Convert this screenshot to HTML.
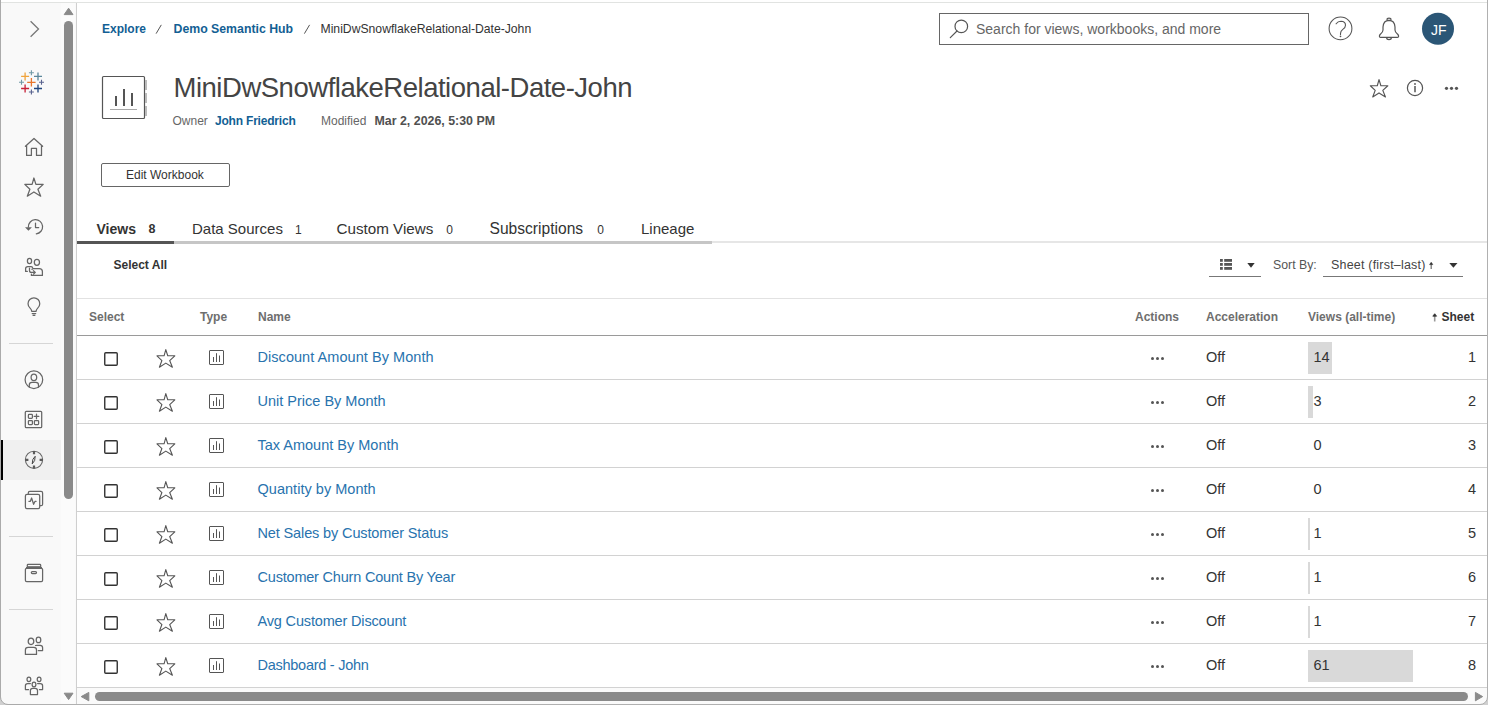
<!DOCTYPE html><html><head><meta charset="utf-8"><title>Workbook</title><style>
*{margin:0;padding:0;box-sizing:border-box}
html,body{width:1488px;height:705px;overflow:hidden;background:#fff;
 font-family:"Liberation Sans",sans-serif;position:relative}
.t{position:absolute;white-space:nowrap}
.a{position:absolute}
svg.i{position:absolute;left:0;top:0;overflow:visible}
</style></head><body>
<div class="a" style="left:0px;top:2px;width:1488px;height:1px;background:#e1e3e1;"></div>
<div class="a" style="left:1px;top:3px;width:75px;height:701px;background:#f9f9f9;"></div>
<div class="a" style="left:61px;top:3px;width:14px;height:701px;background:#fbfbfb;"></div>
<div class="a" style="left:76px;top:3px;width:1px;height:701px;background:#cfcfcf;"></div>
<div class="a" style="left:0px;top:0px;width:1px;height:705px;background:#ababab;"></div>
<div class="a" style="left:1487px;top:0px;width:1px;height:705px;background:#b0b0b0;"></div>
<div class="a" style="left:0px;top:704px;width:1488px;height:1px;background:#b0b0b0;"></div>
<div class="a" style="left:1px;top:440px;width:60px;height:40px;background:#f0f0f0;"></div>
<div class="a" style="left:1px;top:440px;width:2px;height:40px;background:#000;"></div>
<div class="a" style="left:9px;top:343px;width:44px;height:1px;background:#d6d6d6;"></div>
<div class="a" style="left:9px;top:536px;width:44px;height:1px;background:#d6d6d6;"></div>
<div class="a" style="left:9px;top:609px;width:44px;height:1px;background:#d6d6d6;"></div>
<div class="a" style="left:64px;top:21px;width:9px;height:478px;background:#8a8a8a;border-radius:4.5px"></div>
<svg class="i" width="77" height="705"><path d="M30.6 21.2 L38.5 29 L30.6 36.8" fill="none" stroke="#777" stroke-width="1.3"/><path d="M27.2 82.3 H35.6 M31.4 78.1 V86.5" stroke="#e8762c" stroke-width="1.3" fill="none"/><path d="M21.1 76.4 H29.1 M25.1 72.4 V80.4" stroke="#f0a43c" stroke-width="1.3" fill="none"/><path d="M34 76.4 H42 M38 72.4 V80.4" stroke="#5b879b" stroke-width="1.3" fill="none"/><path d="M21.1 88.5 H29.1 M25.1 84.5 V92.5" stroke="#c72037" stroke-width="1.3" fill="none"/><path d="M34 88.5 H42 M38 84.5 V92.5" stroke="#1f457e" stroke-width="1.3" fill="none"/><path d="M28.9 72.7 H33.9 M31.4 70.2 V75.2" stroke="#7099a6" stroke-width="1.1" fill="none"/><path d="M28.9 92 H33.9 M31.4 89.5 V94.5" stroke="#59628e" stroke-width="1.1" fill="none"/><path d="M19.0 82.3 H24.0 M21.5 79.8 V84.8" stroke="#7099a6" stroke-width="1.1" fill="none"/><path d="M39.0 82.3 H44.0 M41.5 79.8 V84.8" stroke="#59628e" stroke-width="1.1" fill="none"/><path d="M25.4 146.3 L34 138.5 L42.6 146.3 M26.6 145.2 V155.4 H31.4 V148.4 H36.5 V155.4 H41.5 V145.2" fill="none" stroke="#666" stroke-width="1.25" stroke-linecap="round" stroke-linejoin="round"/><path d="M33.90 178.00 L35.90 184.40 L43.20 184.40 L37.90 189.30 L40.70 196.20 L33.90 192.00 L27.30 196.20 L29.90 189.30 L24.80 184.40 L32.10 184.40 Z" fill="none" stroke="#666" stroke-width="1.25" stroke-linecap="round" stroke-linejoin="round" stroke-miterlimit="1.5"/><path d="M28.4 227 A7.1 7.1 0 1 1 36.3 233.8" fill="none" stroke="#666" stroke-width="1.25" stroke-linecap="round" stroke-linejoin="round"/><path d="M25 227.3 L31.9 227.3 L28.45 230.8 Z" fill="#666"/><path d="M35.5 223.1 V227.5 H38.7" fill="none" stroke="#666" stroke-width="1.25" stroke-linecap="round" stroke-linejoin="round"/><ellipse cx="29.5" cy="261" rx="2.1" ry="2.6" fill="none" stroke="#666" stroke-width="1.25" stroke-linecap="round" stroke-linejoin="round"/><ellipse cx="36.9" cy="262.3" rx="2.6" ry="3" fill="none" stroke="#666" stroke-width="1.25" stroke-linecap="round" stroke-linejoin="round"/><path d="M27.3 271.4 H25.6 V268.8 Q25.6 266.6 27.8 266.6 H30.8 Q32.2 266.6 32.6 267.6" fill="none" stroke="#666" stroke-width="1.25" stroke-linecap="round" stroke-linejoin="round"/><path d="M29.5 268.2 V270.4 Q29.5 272.4 31.5 272.4 H35.2 M33.4 270.6 L35.3 272.4 L33.4 274.2" fill="none" stroke="#666" stroke-width="1.25" stroke-linecap="round" stroke-linejoin="round"/><path d="M31.4 274 V275.4 H42.4 V271.6 Q42.4 268.5 39.3 268.5 H33.4 Q32.4 268.5 31.9 269.3" fill="none" stroke="#666" stroke-width="1.25" stroke-linecap="round" stroke-linejoin="round"/><path d="M31.8 311.4 Q31.6 309.6 29.9 307.9 A5.86 5.86 0 1 1 37.9 307.9 Q36.2 309.6 36 311.4 Z M32.2 313.5 H35.7 M33.1 315.4 H34.8" fill="none" stroke="#666" stroke-width="1.25" stroke-linecap="round" stroke-linejoin="round"/><circle cx="33.9" cy="379.7" r="8.8" fill="none" stroke="#666" stroke-width="1.25" stroke-linecap="round" stroke-linejoin="round"/><ellipse cx="33.9" cy="377.3" rx="2.8" ry="3.3" fill="none" stroke="#666" stroke-width="1.25" stroke-linecap="round" stroke-linejoin="round"/><path d="M29.3 387.2 V385 Q29.3 382.3 32 382.3 H35.8 Q38.5 382.3 38.5 385 V387.2" fill="none" stroke="#666" stroke-width="1.25" stroke-linecap="round" stroke-linejoin="round"/><rect x="25.3" y="411.3" width="16.4" height="16.4" rx="1" fill="none" stroke="#666" stroke-width="1.25" stroke-linecap="round" stroke-linejoin="round"/><rect x="28.4" y="414.4" width="4" height="4" rx="0.8" fill="none" stroke="#666" stroke-width="1.25" stroke-linecap="round" stroke-linejoin="round"/><rect x="28.4" y="420.5" width="4" height="4" rx="0.8" fill="none" stroke="#666" stroke-width="1.25" stroke-linecap="round" stroke-linejoin="round"/><rect x="34.4" y="420.5" width="4.2" height="4" rx="0.8" fill="none" stroke="#666" stroke-width="1.25" stroke-linecap="round" stroke-linejoin="round"/><path d="M36.5 414.1 V418.7 M34.2 416.4 H38.8" fill="none" stroke="#666" stroke-width="1.25" stroke-linecap="round" stroke-linejoin="round"/><circle cx="34" cy="459.8" r="8.6" fill="none" stroke="#666" stroke-width="1.1"/><path d="M34 451 V454.2 M34 465.4 V468.6 M25.2 459.8 H28.4 M39.6 459.8 H42.8" stroke="#5a5a5a" stroke-width="2.2"/><path d="M35.2 456.3 L34.6 460.6 L32.2 463.9 L32.9 459.3 Z" fill="none" stroke="#444" stroke-width="1"/><path d="M28.3 493.5 V492.9 Q28.3 491.4 29.8 491.4 H41.1 Q42.6 491.4 42.6 492.9 V504.2 Q42.6 505.7 41.1 505.7 H40.4" fill="none" stroke="#666" stroke-width="1.25" stroke-linecap="round" stroke-linejoin="round"/><rect x="25.4" y="494.3" width="14.3" height="14.3" rx="1.6" fill="none" stroke="#666" stroke-width="1.25" stroke-linecap="round" stroke-linejoin="round"/><path d="M28.9 501.3 H30.4 L31.6 498 L33.6 504.3 L35.1 501.3 H36.1" fill="none" stroke="#666" stroke-width="1.25" stroke-linecap="round" stroke-linejoin="round"/><rect x="25.4" y="568.3" width="17.2" height="13.3" rx="1.3" fill="none" stroke="#666" stroke-width="1.25" stroke-linecap="round" stroke-linejoin="round"/><path d="M26.6 568 V567.3 H41.4 V568" fill="none" stroke="#666" stroke-width="1.25" stroke-linecap="round" stroke-linejoin="round"/><rect x="27.3" y="564.4" width="13.4" height="2.4" rx="0.8" fill="none" stroke="#666" stroke-width="1.25" stroke-linecap="round" stroke-linejoin="round"/><rect x="31.3" y="571.5" width="5.2" height="2" rx="1" fill="none" stroke="#666" stroke-width="1.25" stroke-linecap="round" stroke-linejoin="round"/><ellipse cx="31" cy="641.3" rx="2.8" ry="3.2" fill="none" stroke="#666" stroke-width="1.25" stroke-linecap="round" stroke-linejoin="round"/><ellipse cx="38.5" cy="639.9" rx="2.3" ry="2.8" fill="none" stroke="#666" stroke-width="1.25" stroke-linecap="round" stroke-linejoin="round"/><path d="M25.4 654.4 V650 Q25.4 647.3 28.1 647.3 H33.8 Q36.5 647.3 36.5 650 V654.4 Z" fill="none" stroke="#666" stroke-width="1.25" stroke-linecap="round" stroke-linejoin="round"/><path d="M35.5 645.5 Q36 645.3 37 645.3 H40.1 Q42.6 645.3 42.6 647.8 V650.5 H38.3" fill="none" stroke="#666" stroke-width="1.25" stroke-linecap="round" stroke-linejoin="round"/><ellipse cx="28.9" cy="679.3" rx="1.9" ry="2.3" fill="none" stroke="#666" stroke-width="1.25" stroke-linecap="round" stroke-linejoin="round"/><ellipse cx="39.1" cy="679.3" rx="1.9" ry="2.3" fill="none" stroke="#666" stroke-width="1.25" stroke-linecap="round" stroke-linejoin="round"/><ellipse cx="34" cy="684.5" rx="1.9" ry="2.3" fill="none" stroke="#666" stroke-width="1.25" stroke-linecap="round" stroke-linejoin="round"/><path d="M30.4 683.5 H27.6 Q25.4 683.5 25.4 685.7 V689.5 H28.6" fill="none" stroke="#666" stroke-width="1.25" stroke-linecap="round" stroke-linejoin="round"/><path d="M37.6 683.5 H40.4 Q42.6 683.5 42.6 685.7 V689.5 H39.4" fill="none" stroke="#666" stroke-width="1.25" stroke-linecap="round" stroke-linejoin="round"/><path d="M30.4 694.6 V690.6 Q30.4 688.3 32.7 688.3 H35.2 Q37.5 688.3 37.5 690.6 V694.6 Z" fill="none" stroke="#666" stroke-width="1.25" stroke-linecap="round" stroke-linejoin="round"/><path d="M64.2 14.6 L68.6 8.2 L73 14.6 Z" fill="#8a8a8a" stroke="#8a8a8a" stroke-width="1" stroke-linejoin="round"/><path d="M64.2 693.2 L68.6 699.6 L73 693.2 Z" fill="#8a8a8a" stroke="#8a8a8a" stroke-width="1" stroke-linejoin="round"/></svg>
<div class="t" style="left:102px;top:22.84px;font-size:12px;line-height:12px;font-weight:700;color:#135f94;">Explore</div>
<div class="t" style="left:173.5px;top:22.59px;font-size:12.3px;line-height:12.3px;font-weight:700;color:#135f94;">Demo Semantic Hub</div>
<div class="t" style="left:320.5px;top:22.67px;font-size:12.2px;line-height:12.2px;font-weight:400;color:#333;">MiniDwSnowflakeRelational-Date-John</div>
<div class="a" style="left:939px;top:13px;width:370px;height:32px;border:1px solid #666;background:#fff"></div>
<div class="t" style="left:976px;top:21.75px;font-size:14px;line-height:14px;font-weight:400;color:#666;">Search for views, workbooks, and more</div>
<svg class="i" width="1488" height="705"><circle cx="961.3" cy="26.4" r="6.3" fill="none" stroke="#555" stroke-width="1.2" stroke-linecap="round" stroke-linejoin="round"/><path d="M957 31 L950.3 37.6" fill="none" stroke="#555" stroke-width="1.2" stroke-linecap="round" stroke-linejoin="round"/><circle cx="1340.5" cy="28.4" r="11.4" fill="none" stroke="#555" stroke-width="1.05"/><path d="M1336.1 23.8 Q1337.9 21.2 1341 21.2 Q1345.5 21.3 1345.5 25.2 Q1345.5 27.5 1342.8 29.4 Q1340.5 31.1 1340.5 33.4 V34.4" fill="none" stroke="#555" stroke-width="1.1" stroke-linecap="round"/><circle cx="1340.5" cy="36.3" r="0.85" fill="#555"/><path d="M1389 20.3 Q1383.4 20.4 1383 27 V30 Q1382.8 32 1381.2 33.4 L1380.1 34.5 Q1379.4 35.3 1379.4 36.3 Q1379.4 37.4 1380.5 37.4 H1397.5 Q1398.6 37.4 1398.6 36.3 Q1398.6 35.3 1397.9 34.5 L1396.8 33.4 Q1395.2 32 1395 30 V27 Q1394.6 20.4 1389 20.3 Z" fill="none" stroke="#555" stroke-width="1.2" stroke-linecap="round" stroke-linejoin="round"/><ellipse cx="1389" cy="19.3" rx="2.1" ry="1.2" fill="none" stroke="#555" stroke-width="1.2" stroke-linecap="round" stroke-linejoin="round"/><path d="M1386.4 37.7 Q1386.7 39.7 1389 39.7 Q1391.3 39.7 1391.6 37.7" fill="none" stroke="#555" stroke-width="1.2" stroke-linecap="round" stroke-linejoin="round"/><circle cx="1438" cy="28.8" r="16" fill="#2b5676"/><path d="M156.3 33.3 L161.1 25.2 M304.6 33.3 L309.4 25.2" stroke="#555" stroke-width="1" stroke-linecap="round"/><rect x="102.5" y="76.5" width="42" height="42" rx="1" fill="none" stroke="#555" stroke-width="1.2"/><path d="M116 96 V106 M124 89 V106 M132 93 V106" stroke="#555" stroke-width="2"/><path d="M110 109.5 H137" stroke="#aaa" stroke-width="1"/><path d="M146 80 V90 M146 93 V103 M146 106 V116" stroke="#bbb" stroke-width="2"/><path d="M1379.00 79.65 L1380.90 85.73 L1387.84 85.73 L1382.80 90.39 L1385.46 96.94 L1379.00 92.95 L1372.73 96.94 L1375.20 90.39 L1370.36 85.73 L1377.29 85.73 Z" fill="none" stroke="#555" stroke-width="1.15" stroke-linejoin="round" stroke-miterlimit="1.5"/><circle cx="1415" cy="88" r="7.6" fill="none" stroke="#555" stroke-width="1.2" stroke-linecap="round" stroke-linejoin="round"/><path d="M1415 86 V92.3" stroke="#555" stroke-width="1.5"/><circle cx="1415" cy="84" r="0.9" fill="#555"/><circle cx="1446.5" cy="88.3" r="1.6" fill="#555"/><circle cx="1451.5" cy="88.3" r="1.6" fill="#555"/><circle cx="1456.5" cy="88.3" r="1.6" fill="#555"/><rect x="1220" y="259" width="2.8" height="2.8" fill="#555"/><rect x="1224.2" y="259" width="7.8" height="2.8" fill="#555"/><rect x="1220" y="263" width="2.8" height="2.8" fill="#555"/><rect x="1224.2" y="263" width="7.8" height="2.8" fill="#555"/><rect x="1220" y="267" width="2.8" height="2.8" fill="#555"/><rect x="1224.2" y="267" width="7.8" height="2.8" fill="#555"/><path d="M1247.3 263 H1254.7 L1251 267.7 Z" fill="#333"/><path d="M1449.3 263 H1457.5 L1453.4 267.7 Z" fill="#333"/></svg>
<div class="t" style="left:1431px;top:22.75px;font-size:14px;line-height:14px;font-weight:400;color:#fff;">JF</div>
<div class="t" style="left:173.5px;top:74.02px;font-size:27.5px;line-height:27.5px;font-weight:400;color:#444;letter-spacing:-0.48px">MiniDwSnowflakeRelational-Date-John</div>
<div class="t" style="left:172.5px;top:115.14px;font-size:12px;line-height:12px;font-weight:400;color:#666;">Owner</div>
<div class="t" style="left:215px;top:115.14px;font-size:12px;line-height:12px;font-weight:700;color:#135f94;letter-spacing:-0.2px">John Friedrich</div>
<div class="t" style="left:321px;top:115.14px;font-size:12px;line-height:12px;font-weight:400;color:#666;">Modified</div>
<div class="t" style="left:374.5px;top:114.80px;font-size:12.4px;line-height:12.4px;font-weight:700;color:#505050;">Mar 2, 2026, 5:30 PM</div>
<div class="a" style="left:101px;top:163px;width:129px;height:24px;border:1px solid #666;border-radius:2px"></div>
<div class="t" style="left:126px;top:168.54px;font-size:12px;line-height:12px;font-weight:400;color:#333;">Edit Workbook</div>
<div class="a" style="left:77px;top:241px;width:97px;height:3px;background:#555;"></div>
<div class="a" style="left:174px;top:241px;width:538px;height:3px;background:#c6c6c6;"></div>
<div class="a" style="left:712px;top:241px;width:775px;height:2px;background:#e6e6e6;"></div>
<div class="t" style="left:96.5px;top:221.65px;font-size:14px;line-height:14px;font-weight:700;color:#333;">Views</div>
<div class="t" style="left:148.5px;top:222.92px;font-size:12.5px;line-height:12.5px;font-weight:700;color:#333;">8</div>
<div class="t" style="left:192px;top:220.80px;font-size:15px;line-height:15px;font-weight:400;color:#333;">Data Sources</div>
<div class="t" style="left:295px;top:223.84px;font-size:12px;line-height:12px;font-weight:400;color:#333;">1</div>
<div class="t" style="left:336.5px;top:220.63px;font-size:15.2px;line-height:15.2px;font-weight:400;color:#333;">Custom Views</div>
<div class="t" style="left:446.3px;top:223.84px;font-size:12px;line-height:12px;font-weight:400;color:#333;">0</div>
<div class="t" style="left:489.5px;top:220.99px;font-size:15.6px;line-height:15.6px;font-weight:400;color:#333;">Subscriptions</div>
<div class="t" style="left:597.2px;top:223.84px;font-size:12px;line-height:12px;font-weight:400;color:#333;">0</div>
<div class="t" style="left:641px;top:220.80px;font-size:15px;line-height:15px;font-weight:400;color:#333;">Lineage</div>
<div class="t" style="left:113.5px;top:258.64px;font-size:12px;line-height:12px;font-weight:700;color:#333;">Select All</div>
<div class="a" style="left:1209px;top:276px;width:52px;height:1px;background:#777;"></div>
<div class="t" style="left:1273px;top:258.89px;font-size:12.3px;line-height:12.3px;font-weight:400;color:#555;">Sort By:</div>
<div class="a" style="left:1323px;top:276px;width:140px;height:1px;background:#777;"></div>
<div class="t" style="left:1331px;top:258.72px;font-size:12.5px;line-height:12.5px;font-weight:400;color:#444;letter-spacing:0.2px">Sheet (first&ndash;last)</div>
<svg class="i" width="1488" height="705"><path d="M1431.2 263 V269" stroke="#777" stroke-width="1.3"/><path d="M1429.6 264.6 L1431.2 262.3 L1432.8 264.6 Z" fill="#333" stroke="#333" stroke-width="0.6"/></svg>
<div class="a" style="left:77px;top:298px;width:1410px;height:1px;background:#e2e2e2;"></div>
<div class="a" style="left:77px;top:335px;width:1410px;height:1px;background:#9a9a9a;"></div>
<div class="t" style="left:89px;top:310.64px;font-size:12px;line-height:12px;font-weight:700;color:#6e6e6e;">Select</div>
<div class="t" style="left:200px;top:310.64px;font-size:12px;line-height:12px;font-weight:700;color:#6e6e6e;">Type</div>
<div class="t" style="left:258px;top:310.64px;font-size:12px;line-height:12px;font-weight:700;color:#6e6e6e;">Name</div>
<div class="t" style="left:1135px;top:310.64px;font-size:12px;line-height:12px;font-weight:700;color:#6e6e6e;">Actions</div>
<div class="t" style="left:1206px;top:310.64px;font-size:12px;line-height:12px;font-weight:700;color:#6e6e6e;">Acceleration</div>
<div class="t" style="left:1308px;top:310.64px;font-size:12px;line-height:12px;font-weight:700;color:#6e6e6e;">Views (all-time)</div>
<div class="t" style="left:1441.5px;top:310.64px;font-size:12px;line-height:12px;font-weight:700;color:#333;">Sheet</div>
<div class="a" style="left:77px;top:379px;width:1410px;height:1px;background:#d2d2d2;"></div>
<div class="a" style="left:1308px;top:342px;width:24px;height:32px;background:#d9d9d9;"></div>
<div class="t" style="left:257.5px;top:349.73px;font-size:14.5px;line-height:14.5px;font-weight:400;color:#2873ae;letter-spacing:0.05px">Discount Amount By Month</div>
<div class="t" style="left:1206px;top:349.73px;font-size:14.5px;line-height:14.5px;font-weight:400;color:#333;">Off</div>
<div class="t" style="left:1313.5px;top:349.73px;font-size:14.5px;line-height:14.5px;font-weight:400;color:#333;">14</div>
<div class="t" style="left:1376px;top:349.73px;font-size:14.5px;line-height:14.5px;font-weight:400;color:#333;width:100px;text-align:right">1</div>
<div class="a" style="left:77px;top:423px;width:1410px;height:1px;background:#d2d2d2;"></div>
<div class="a" style="left:1308px;top:386px;width:5px;height:32px;background:#d9d9d9;"></div>
<div class="t" style="left:257.5px;top:393.73px;font-size:14.5px;line-height:14.5px;font-weight:400;color:#2873ae;letter-spacing:0px">Unit Price By Month</div>
<div class="t" style="left:1206px;top:393.73px;font-size:14.5px;line-height:14.5px;font-weight:400;color:#333;">Off</div>
<div class="t" style="left:1313.5px;top:393.73px;font-size:14.5px;line-height:14.5px;font-weight:400;color:#333;">3</div>
<div class="t" style="left:1376px;top:393.73px;font-size:14.5px;line-height:14.5px;font-weight:400;color:#333;width:100px;text-align:right">2</div>
<div class="a" style="left:77px;top:467px;width:1410px;height:1px;background:#d2d2d2;"></div>
<div class="t" style="left:257.5px;top:437.73px;font-size:14.5px;line-height:14.5px;font-weight:400;color:#2873ae;letter-spacing:0px">Tax Amount By Month</div>
<div class="t" style="left:1206px;top:437.73px;font-size:14.5px;line-height:14.5px;font-weight:400;color:#333;">Off</div>
<div class="t" style="left:1313.5px;top:437.73px;font-size:14.5px;line-height:14.5px;font-weight:400;color:#333;">0</div>
<div class="t" style="left:1376px;top:437.73px;font-size:14.5px;line-height:14.5px;font-weight:400;color:#333;width:100px;text-align:right">3</div>
<div class="a" style="left:77px;top:511px;width:1410px;height:1px;background:#d2d2d2;"></div>
<div class="t" style="left:257.5px;top:481.73px;font-size:14.5px;line-height:14.5px;font-weight:400;color:#2873ae;letter-spacing:0.03px">Quantity by Month</div>
<div class="t" style="left:1206px;top:481.73px;font-size:14.5px;line-height:14.5px;font-weight:400;color:#333;">Off</div>
<div class="t" style="left:1313.5px;top:481.73px;font-size:14.5px;line-height:14.5px;font-weight:400;color:#333;">0</div>
<div class="t" style="left:1376px;top:481.73px;font-size:14.5px;line-height:14.5px;font-weight:400;color:#333;width:100px;text-align:right">4</div>
<div class="a" style="left:77px;top:555px;width:1410px;height:1px;background:#d2d2d2;"></div>
<div class="a" style="left:1308px;top:518px;width:2px;height:32px;background:#d9d9d9;"></div>
<div class="t" style="left:257.5px;top:525.73px;font-size:14.5px;line-height:14.5px;font-weight:400;color:#2873ae;letter-spacing:-0.13px">Net Sales by Customer Status</div>
<div class="t" style="left:1206px;top:525.73px;font-size:14.5px;line-height:14.5px;font-weight:400;color:#333;">Off</div>
<div class="t" style="left:1313.5px;top:525.73px;font-size:14.5px;line-height:14.5px;font-weight:400;color:#333;">1</div>
<div class="t" style="left:1376px;top:525.73px;font-size:14.5px;line-height:14.5px;font-weight:400;color:#333;width:100px;text-align:right">5</div>
<div class="a" style="left:77px;top:599px;width:1410px;height:1px;background:#d2d2d2;"></div>
<div class="a" style="left:1308px;top:562px;width:2px;height:32px;background:#d9d9d9;"></div>
<div class="t" style="left:257.5px;top:569.73px;font-size:14.5px;line-height:14.5px;font-weight:400;color:#2873ae;letter-spacing:-0.2px">Customer Churn Count By Year</div>
<div class="t" style="left:1206px;top:569.73px;font-size:14.5px;line-height:14.5px;font-weight:400;color:#333;">Off</div>
<div class="t" style="left:1313.5px;top:569.73px;font-size:14.5px;line-height:14.5px;font-weight:400;color:#333;">1</div>
<div class="t" style="left:1376px;top:569.73px;font-size:14.5px;line-height:14.5px;font-weight:400;color:#333;width:100px;text-align:right">6</div>
<div class="a" style="left:77px;top:643px;width:1410px;height:1px;background:#d2d2d2;"></div>
<div class="a" style="left:1308px;top:606px;width:2px;height:32px;background:#d9d9d9;"></div>
<div class="t" style="left:257.5px;top:613.73px;font-size:14.5px;line-height:14.5px;font-weight:400;color:#2873ae;letter-spacing:-0.16px">Avg Customer Discount</div>
<div class="t" style="left:1206px;top:613.73px;font-size:14.5px;line-height:14.5px;font-weight:400;color:#333;">Off</div>
<div class="t" style="left:1313.5px;top:613.73px;font-size:14.5px;line-height:14.5px;font-weight:400;color:#333;">1</div>
<div class="t" style="left:1376px;top:613.73px;font-size:14.5px;line-height:14.5px;font-weight:400;color:#333;width:100px;text-align:right">7</div>
<div class="a" style="left:77px;top:687px;width:1410px;height:1px;background:#d2d2d2;"></div>
<div class="a" style="left:1308px;top:650px;width:105px;height:32px;background:#d9d9d9;"></div>
<div class="t" style="left:257.5px;top:657.73px;font-size:14.5px;line-height:14.5px;font-weight:400;color:#2873ae;letter-spacing:-0.26px">Dashboard - John</div>
<div class="t" style="left:1206px;top:657.73px;font-size:14.5px;line-height:14.5px;font-weight:400;color:#333;">Off</div>
<div class="t" style="left:1313.5px;top:657.73px;font-size:14.5px;line-height:14.5px;font-weight:400;color:#333;">61</div>
<div class="t" style="left:1376px;top:657.73px;font-size:14.5px;line-height:14.5px;font-weight:400;color:#333;width:100px;text-align:right">8</div>
<div class="a" style="left:77px;top:688px;width:1410px;height:16px;background:#fafafa;"></div>
<div class="a" style="left:95px;top:692px;width:1373px;height:9px;background:#8a8a8a;border-radius:4.5px"></div>
<svg class="i" width="1488" height="705"><rect x="104.75" y="352.75" width="12.5" height="12.5" rx="1" fill="none" stroke="#333" stroke-width="1.4"/><path d="M165.80 349.57 L167.74 355.78 L174.82 355.78 L169.68 360.53 L172.40 367.22 L165.80 363.15 L159.40 367.22 L161.92 360.53 L156.97 355.78 L164.05 355.78 Z" fill="none" stroke="#555" stroke-width="1.1" stroke-linejoin="round" stroke-miterlimit="1.5"/><rect x="209.5" y="350.5" width="14" height="14" rx="0.5" fill="none" stroke="#555" stroke-width="1"/><path d="M213.5 357 V362 M216.5 353.2 V362 M219.5 355.5 V362" stroke="#555" stroke-width="1"/><circle cx="1152.5" cy="358.5" r="1.5" fill="#555"/><circle cx="1157.5" cy="358.5" r="1.5" fill="#555"/><circle cx="1162.5" cy="358.5" r="1.5" fill="#555"/><rect x="104.75" y="396.75" width="12.5" height="12.5" rx="1" fill="none" stroke="#333" stroke-width="1.4"/><path d="M165.80 393.57 L167.74 399.78 L174.82 399.78 L169.68 404.53 L172.40 411.22 L165.80 407.15 L159.40 411.22 L161.92 404.53 L156.97 399.78 L164.05 399.78 Z" fill="none" stroke="#555" stroke-width="1.1" stroke-linejoin="round" stroke-miterlimit="1.5"/><rect x="209.5" y="394.5" width="14" height="14" rx="0.5" fill="none" stroke="#555" stroke-width="1"/><path d="M213.5 401 V406 M216.5 397.2 V406 M219.5 399.5 V406" stroke="#555" stroke-width="1"/><circle cx="1152.5" cy="402.5" r="1.5" fill="#555"/><circle cx="1157.5" cy="402.5" r="1.5" fill="#555"/><circle cx="1162.5" cy="402.5" r="1.5" fill="#555"/><rect x="104.75" y="440.75" width="12.5" height="12.5" rx="1" fill="none" stroke="#333" stroke-width="1.4"/><path d="M165.80 437.57 L167.74 443.78 L174.82 443.78 L169.68 448.53 L172.40 455.22 L165.80 451.15 L159.40 455.22 L161.92 448.53 L156.97 443.78 L164.05 443.78 Z" fill="none" stroke="#555" stroke-width="1.1" stroke-linejoin="round" stroke-miterlimit="1.5"/><rect x="209.5" y="438.5" width="14" height="14" rx="0.5" fill="none" stroke="#555" stroke-width="1"/><path d="M213.5 445 V450 M216.5 441.2 V450 M219.5 443.5 V450" stroke="#555" stroke-width="1"/><circle cx="1152.5" cy="446.5" r="1.5" fill="#555"/><circle cx="1157.5" cy="446.5" r="1.5" fill="#555"/><circle cx="1162.5" cy="446.5" r="1.5" fill="#555"/><rect x="104.75" y="484.75" width="12.5" height="12.5" rx="1" fill="none" stroke="#333" stroke-width="1.4"/><path d="M165.80 481.57 L167.74 487.78 L174.82 487.78 L169.68 492.53 L172.40 499.22 L165.80 495.15 L159.40 499.22 L161.92 492.53 L156.97 487.78 L164.05 487.78 Z" fill="none" stroke="#555" stroke-width="1.1" stroke-linejoin="round" stroke-miterlimit="1.5"/><rect x="209.5" y="482.5" width="14" height="14" rx="0.5" fill="none" stroke="#555" stroke-width="1"/><path d="M213.5 489 V494 M216.5 485.2 V494 M219.5 487.5 V494" stroke="#555" stroke-width="1"/><circle cx="1152.5" cy="490.5" r="1.5" fill="#555"/><circle cx="1157.5" cy="490.5" r="1.5" fill="#555"/><circle cx="1162.5" cy="490.5" r="1.5" fill="#555"/><rect x="104.75" y="528.75" width="12.5" height="12.5" rx="1" fill="none" stroke="#333" stroke-width="1.4"/><path d="M165.80 525.57 L167.74 531.78 L174.82 531.78 L169.68 536.53 L172.40 543.22 L165.80 539.15 L159.40 543.22 L161.92 536.53 L156.97 531.78 L164.05 531.78 Z" fill="none" stroke="#555" stroke-width="1.1" stroke-linejoin="round" stroke-miterlimit="1.5"/><rect x="209.5" y="526.5" width="14" height="14" rx="0.5" fill="none" stroke="#555" stroke-width="1"/><path d="M213.5 533 V538 M216.5 529.2 V538 M219.5 531.5 V538" stroke="#555" stroke-width="1"/><circle cx="1152.5" cy="534.5" r="1.5" fill="#555"/><circle cx="1157.5" cy="534.5" r="1.5" fill="#555"/><circle cx="1162.5" cy="534.5" r="1.5" fill="#555"/><rect x="104.75" y="572.75" width="12.5" height="12.5" rx="1" fill="none" stroke="#333" stroke-width="1.4"/><path d="M165.80 569.57 L167.74 575.78 L174.82 575.78 L169.68 580.53 L172.40 587.22 L165.80 583.15 L159.40 587.22 L161.92 580.53 L156.97 575.78 L164.05 575.78 Z" fill="none" stroke="#555" stroke-width="1.1" stroke-linejoin="round" stroke-miterlimit="1.5"/><rect x="209.5" y="570.5" width="14" height="14" rx="0.5" fill="none" stroke="#555" stroke-width="1"/><path d="M213.5 577 V582 M216.5 573.2 V582 M219.5 575.5 V582" stroke="#555" stroke-width="1"/><circle cx="1152.5" cy="578.5" r="1.5" fill="#555"/><circle cx="1157.5" cy="578.5" r="1.5" fill="#555"/><circle cx="1162.5" cy="578.5" r="1.5" fill="#555"/><rect x="104.75" y="616.75" width="12.5" height="12.5" rx="1" fill="none" stroke="#333" stroke-width="1.4"/><path d="M165.80 613.57 L167.74 619.78 L174.82 619.78 L169.68 624.53 L172.40 631.22 L165.80 627.15 L159.40 631.22 L161.92 624.53 L156.97 619.78 L164.05 619.78 Z" fill="none" stroke="#555" stroke-width="1.1" stroke-linejoin="round" stroke-miterlimit="1.5"/><rect x="209.5" y="614.5" width="14" height="14" rx="0.5" fill="none" stroke="#555" stroke-width="1"/><path d="M213.5 621 V626 M216.5 617.2 V626 M219.5 619.5 V626" stroke="#555" stroke-width="1"/><circle cx="1152.5" cy="622.5" r="1.5" fill="#555"/><circle cx="1157.5" cy="622.5" r="1.5" fill="#555"/><circle cx="1162.5" cy="622.5" r="1.5" fill="#555"/><rect x="104.75" y="660.75" width="12.5" height="12.5" rx="1" fill="none" stroke="#333" stroke-width="1.4"/><path d="M165.80 657.57 L167.74 663.78 L174.82 663.78 L169.68 668.53 L172.40 675.22 L165.80 671.15 L159.40 675.22 L161.92 668.53 L156.97 663.78 L164.05 663.78 Z" fill="none" stroke="#555" stroke-width="1.1" stroke-linejoin="round" stroke-miterlimit="1.5"/><rect x="209.5" y="658.5" width="14" height="14" rx="0.5" fill="none" stroke="#555" stroke-width="1"/><path d="M213.5 665 V670 M216.5 661.2 V670 M219.5 663.5 V670" stroke="#555" stroke-width="1"/><circle cx="1152.5" cy="666.5" r="1.5" fill="#555"/><circle cx="1157.5" cy="666.5" r="1.5" fill="#555"/><circle cx="1162.5" cy="666.5" r="1.5" fill="#555"/><path d="M1434.7 313.8 V321.5" stroke="#999" stroke-width="1.6"/><path d="M1432.8 316.2 L1434.7 313.8 L1436.6 316.2 Z" fill="#333" stroke="#333" stroke-width="0.8"/><path d="M88.8 692.4 L81.2 696.6 L88.8 700.8 Z" fill="#8a8a8a" stroke="#8a8a8a" stroke-width="1" stroke-linejoin="round"/><path d="M1475.4 692.4 L1482.6 696.6 L1475.4 700.8 Z" fill="#8a8a8a" stroke="#8a8a8a" stroke-width="1" stroke-linejoin="round"/><path d="M0 696 V705 H8 V704.5 A7.5 7.5 0 0 1 0.5 697 V696 Z" fill="#d0d0d0"/><path d="M0.5 690 V697 A7.5 7.5 0 0 0 8 704.5 H20" fill="none" stroke="#aaa" stroke-width="1"/><path d="M1488 696 V705 H1480 V704.5 A7.5 7.5 0 0 0 1487.5 697 V696 Z" fill="#d0d0d0"/><path d="M1487.5 690 V697 A7.5 7.5 0 0 1 1480 704.5 H1468" fill="none" stroke="#b0b0b0" stroke-width="1"/></svg>
</body></html>
